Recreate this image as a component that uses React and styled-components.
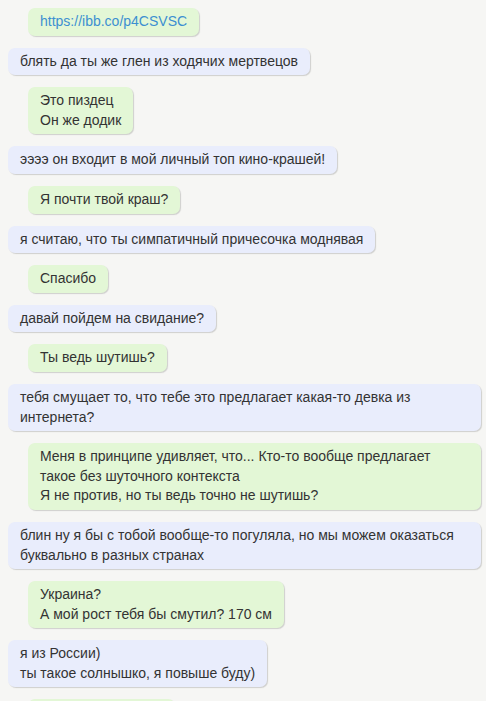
import React from "react";
import styled, { createGlobalStyle } from "styled-components";

const Global = createGlobalStyle`
  html, body { margin: 0; padding: 0; background: #f6f6f4; }
  body { font-family: "Liberation Sans", Arial, sans-serif; }
`;

const Chat = styled.div`
  display: flex;
  flex-direction: column;
  align-items: flex-start;
  gap: 12px;
  padding: 8px 5px 0 8px;
  height: 701px;
  overflow: hidden;
  box-sizing: border-box;
`;

const Bubble = styled.div`
  box-sizing: border-box;
  flex: none;
  margin-left: ${(p) => (p.$mine ? "20px" : "0")};
  max-width: ${(p) => (p.$mine ? "453px" : "473px")};
  padding: 4px 12px;
  border-radius: 7px;
  background: ${(p) => (p.$mine ? "#e3f7d6" : "#e9edfc")};
  box-shadow: 1px 1px 1px rgba(0, 0, 0, 0.16);
  color: #333;
  font-size: 14px;
  line-height: 1.4;
  white-space: pre-line;
`;

const Link = styled.span`
  color: #3d8fd1;
`;

const messages = [
  [true, null, "https://ibb.co/p4CSVSC"],
  [false, "блять да ты же глен из ходячих мертвецов"],
  [true, "Это пиздец\nОн же додик"],
  [false, "ээээ он входит в мой личный топ кино-крашей!"],
  [true, "Я почти твой краш?"],
  [false, "я считаю, что ты симпатичный причесочка моднявая"],
  [true, "Спасибо"],
  [false, "давай пойдем на свидание?"],
  [true, "Ты ведь шутишь?"],
  [false, "тебя смущает то, что тебе это предлагает какая-то девка из интернета?"],
  [true, "Меня в принципе удивляет, что... Кто-то вообще предлагает такое без шуточного контекста\nЯ не против, но ты ведь точно не шутишь?"],
  [false, "блин ну я бы с тобой вообще-то погуляла, но мы можем оказаться буквально в разных странах"],
  [true, "Украина?\nА мой рост тебя бы смутил? 170 см"],
  [false, "я из России)\nты такое солнышко, я повыше буду)"],
  [true, "Конечно не смутил"],
];

export default function App() {
  return (
    <>
      <Global />
      <Chat>
        {messages.map(([mine, text, link], i) => (
          <Bubble key={i} $mine={mine}>
            {link ? <Link>{link}</Link> : text}
          </Bubble>
        ))}
      </Chat>
    </>
  );
}
